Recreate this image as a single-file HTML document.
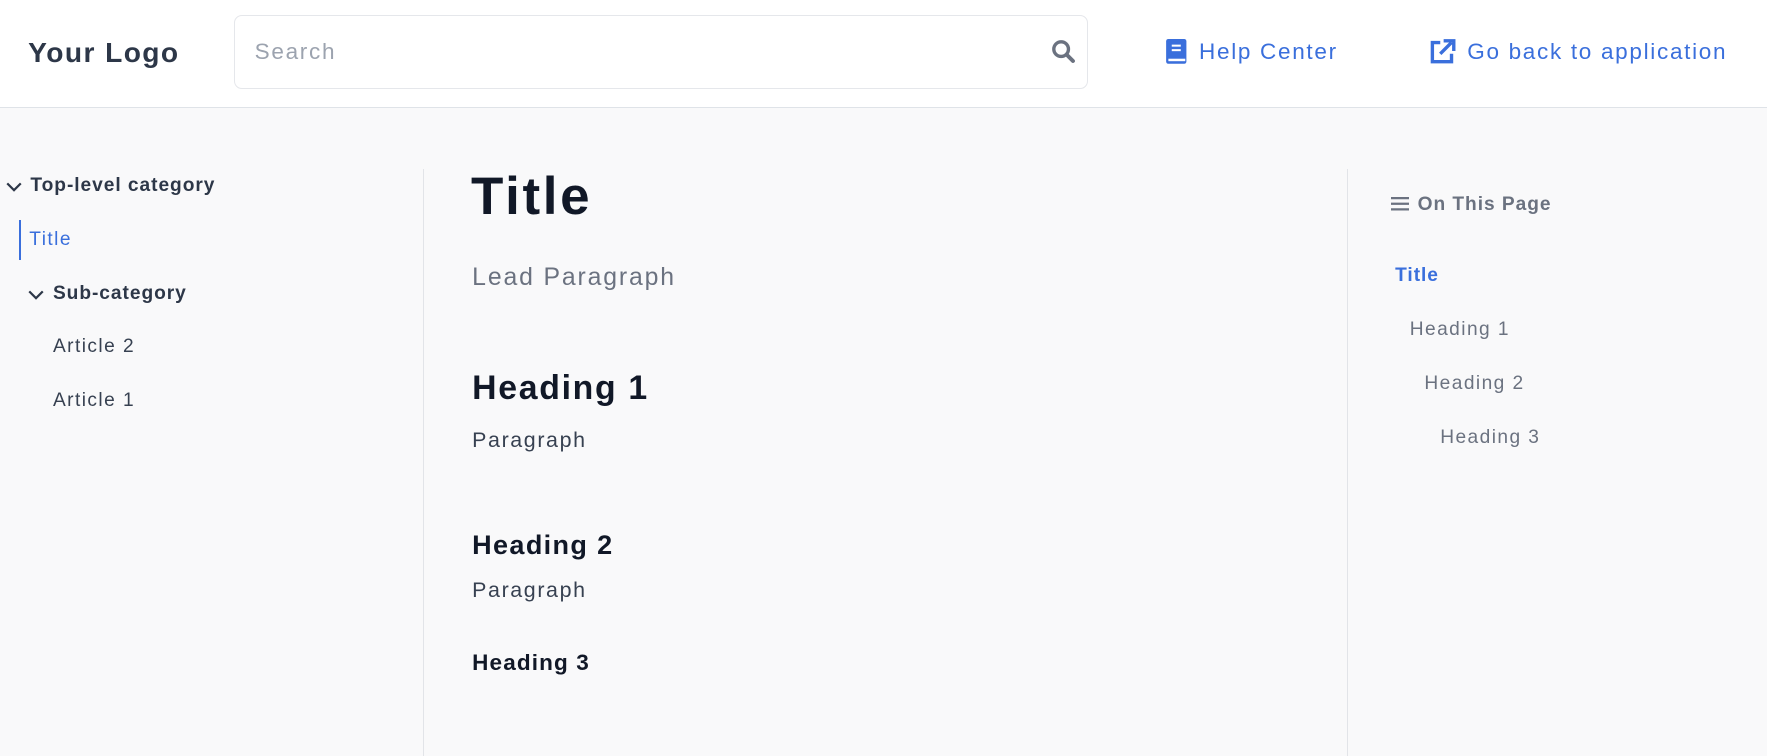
<!DOCTYPE html>
<html><head><meta charset="utf-8"><style>
html,body{margin:0;padding:0;width:1767px;height:756px;overflow:hidden;background:#f9f9fa;}
#w{zoom:1.12691;width:1568px;height:671px;position:relative;font-family:"Liberation Sans",sans-serif;}
.a{position:absolute;white-space:nowrap;line-height:1;letter-spacing:0.075em;}
.a[style*="bold"]{letter-spacing:0.05em;}
.hdr{position:absolute;left:0;top:0;width:1568px;height:95px;background:#fff;border-bottom:1px solid #dfe3e8;}
.blue{color:#3a6fdc;}
</style></head><body><div id="w">
<div class="hdr"></div>
<div class="a" style="left:25px;top:34px;font-size:25px;font-weight:bold;color:#2d3748;">Your Logo</div>
<div class="a" style="left:208px;top:13px;width:756px;height:64px;border:1px solid #e5e7eb;border-radius:7px;background:#fff;"></div>
<div class="a" style="left:226px;top:36px;font-size:20px;color:#9ca3af;">Search</div>
<svg class="a" style="left:933px;top:35px" width="22" height="22" viewBox="0 0 22 22"><circle cx="9" cy="9" r="6.5" fill="none" stroke="#6b7280" stroke-width="3"/><path d="M14 14l5.5 5.5" stroke="#6b7280" stroke-width="3.5" stroke-linecap="round"/></svg>
<svg class="a" style="left:1034px;top:35px" width="20" height="22" viewBox="0 0 20 22"><rect x="1" y="0" width="18" height="22" rx="2" fill="#3a6fdc"/><rect x="6" y="5" width="8" height="1.8" fill="#fff"/><rect x="6" y="9" width="8" height="1.8" fill="#fff"/><rect x="3" y="17.5" width="15" height="2.2" fill="#fff"/></svg>
<div class="a blue" style="left:1064px;top:36px;font-size:20px;">Help Center</div>
<svg class="a" style="left:1268px;top:34px" width="24" height="24" viewBox="0 0 24 24"><path d="M10 4H3v17h17v-7" fill="none" stroke="#3a6fdc" stroke-width="3"/><path d="M10 14L20 4M13 2.5h9v9" fill="none" stroke="#3a6fdc" stroke-width="3"/></svg>
<div class="a blue" style="left:1302px;top:36px;font-size:20px;">Go back to application</div>

<div class="a" style="left:375px;top:150px;width:1px;height:521px;background:#e2e4e8;"></div>
<div class="a" style="left:1195px;top:150px;width:1px;height:521px;background:#e2e4e8;"></div>

<svg class="a" style="left:4px;top:160px" width="16" height="12" viewBox="0 0 16 12"><path d="M2 3l6 6 6-6" fill="none" stroke="#2d3748" stroke-width="2"/></svg>
<div class="a" style="left:27px;top:156px;font-size:17px;font-weight:bold;color:#2d3748;">Top-level category</div>
<div class="a" style="left:17px;top:195px;width:2px;height:36px;background:#3a6fdc;"></div>
<div class="a blue" style="left:26px;top:204px;font-size:17px;">Title</div>
<svg class="a" style="left:24px;top:256px" width="16" height="12" viewBox="0 0 16 12"><path d="M2 3l6 6 6-6" fill="none" stroke="#2d3748" stroke-width="2"/></svg>
<div class="a" style="left:47px;top:252px;font-size:17px;font-weight:bold;color:#2d3748;">Sub-category</div>
<div class="a" style="left:47px;top:299px;font-size:17px;color:#374151;">Article 2</div>
<div class="a" style="left:47px;top:347px;font-size:17px;color:#374151;">Article 1</div>

<div class="a" style="left:418px;top:152px;font-size:47px;font-weight:bold;color:#111827;">Title</div>
<div class="a" style="left:419px;top:236px;font-size:22px;color:#6b7280;">Lead Paragraph</div>
<div class="a" style="left:419px;top:330px;font-size:30px;font-weight:bold;color:#111827;">Heading 1</div>
<div class="a" style="left:419px;top:382px;font-size:19px;color:#374151;">Paragraph</div>
<div class="a" style="left:419px;top:472px;font-size:24px;font-weight:bold;color:#111827;">Heading 2</div>
<div class="a" style="left:419px;top:515px;font-size:19px;color:#374151;">Paragraph</div>
<div class="a" style="left:419px;top:579px;font-size:20px;font-weight:bold;color:#111827;">Heading 3</div>

<svg class="a" style="left:1234px;top:175px" width="16" height="12" viewBox="0 0 16 12"><path d="M0 1h16M0 6h16M0 11h16" stroke="#6b7280" stroke-width="2"/></svg>
<div class="a" style="left:1258px;top:173px;font-size:17px;font-weight:bold;color:#6b7280;">On This Page</div>
<div class="a blue" style="left:1238px;top:236px;font-size:17px;font-weight:bold;">Title</div>
<div class="a" style="left:1251px;top:284px;font-size:17px;color:#6b7280;">Heading 1</div>
<div class="a" style="left:1264px;top:332px;font-size:17px;color:#6b7280;">Heading 2</div>
<div class="a" style="left:1278px;top:380px;font-size:17px;color:#6b7280;">Heading 3</div>
</div></body></html>
